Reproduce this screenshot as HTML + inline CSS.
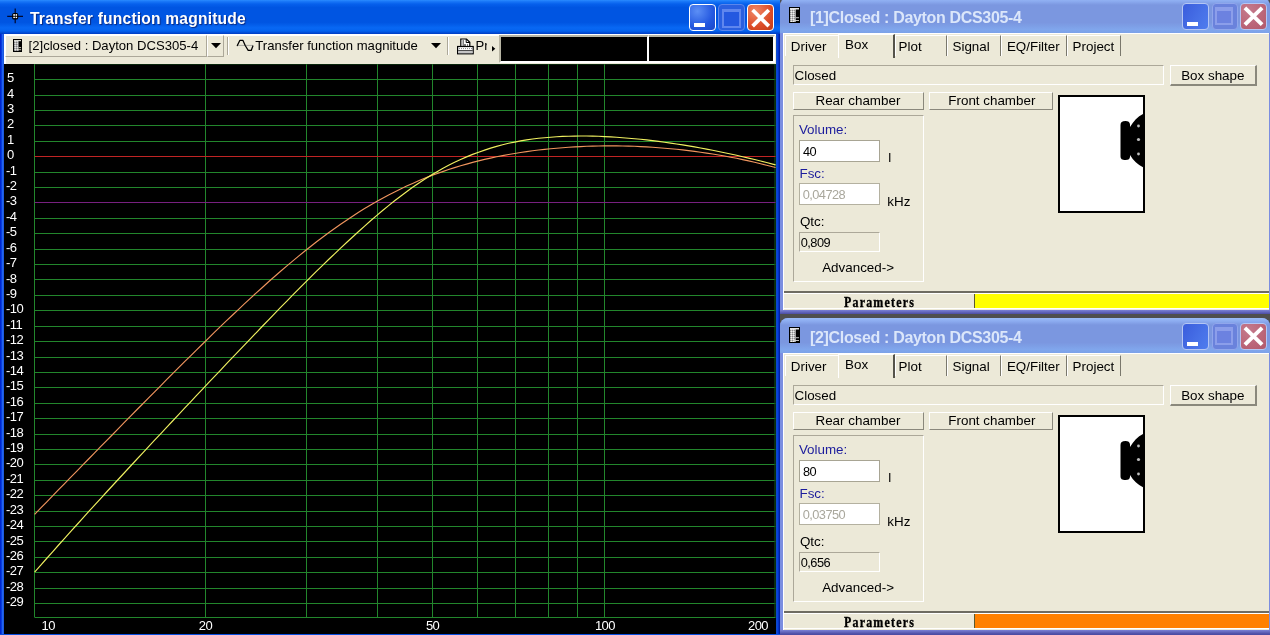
<!DOCTYPE html>
<html><head><meta charset="utf-8"><title>Transfer function magnitude</title>
<style>
html,body{margin:0;padding:0}
#mw,.rwin{will-change:transform}
body{width:1270px;height:635px;overflow:hidden;position:relative;background:#4e4e4e;font-family:"Liberation Sans",sans-serif;font-size:13px;color:#000}
.ax{font-family:"Liberation Sans",sans-serif;font-size:13px;fill:#fff;letter-spacing:-0.55px}
#mw{position:absolute;left:0;top:0;width:780px;height:635px;background:#000;overflow:hidden}
#mw>*{position:absolute}
#mtitle{left:0;top:0;width:780px;height:34px;background:linear-gradient(#2a8cff 0%,#1a78f8 4%,#0660ec 12%,#0055e2 22%,#0055e2 66%,#0868f4 82%,#0462ee 91%,#0040c8 99%)}
#mtitle .tt{position:absolute;left:30px;top:9.4px;line-height:20px;font-weight:bold;font-size:15.6px;letter-spacing:0.2px;color:#fff;text-shadow:1px 1px 1px #0a2a80;white-space:nowrap}
#mbl{left:0;top:34px;width:4px;height:601px;background:linear-gradient(90deg,#0020cc 0,#0030d6 30%,#2264f2 60%,#2060ea 85%,#123c9c 100%)}
#mbr{left:775.6px;top:34px;width:4.4px;height:601px;background:linear-gradient(90deg,#1050c0 0,#0a42dc 35%,#0030c4 65%,#001890 100%)}
#mbb{left:0;top:633.5px;width:780px;height:2px;background:#0a4fe0}
#tool{left:4px;top:34px;width:772px;height:29.5px;background:#ece9d8;border-top:2px solid #fff;border-left:2px solid #fff;box-sizing:border-box}
.tbtn{box-sizing:border-box;border:1px solid #fff;border-right-color:#aca899;border-bottom-color:#aca899}
.tl{white-space:nowrap;line-height:15px;font-size:13.1px}
.tsep{top:37px;width:1px;height:18px;background:#aca899;border-right:1px solid #fff}
.bb{background:#000;border-top:2px solid #b8b5a4;border-bottom:2px solid #fff;border-right:2px solid #fff;box-sizing:border-box;top:35px;height:28.4px}
.tb{position:absolute;top:4px;width:25px;height:25px;border:1px solid #fff;border-radius:4px}
#mmin i{position:absolute;left:4px;top:18px;width:11px;height:4px;background:#fff}
#mmax i{position:absolute;left:3px;top:3.5px;width:15px;height:14.5px;border:2px solid #5f86ee;border-top-width:3.5px;background:#2458e0}
#mcls svg{position:absolute;left:-1px;top:-1.5px}
#mmin{left:689px;background:radial-gradient(circle at 30% 25%,#5c8ff5,#2458e0 60%,#1a47c8)}
#mmax{left:718px;background:#2a5fe0;border-color:#5a86ec}
#mcls{left:747px;background:radial-gradient(circle at 30% 25%,#f08868,#dc4c28 60%,#c03a18)}
.rwin{position:absolute;left:780px;width:490px;height:316px;background:linear-gradient(#7b8ee0 0,#7b8ee0 311px,#8088dc 311.5px,#4c4ca4 316px);border-radius:8px 8px 0 0}
.rtitle{position:absolute;left:0;top:0;width:490px;height:35px;background:linear-gradient(#9abaf8 0%,#8cacf0 9%,#7b97e0 20%,#7b97e0 70%,#80a6ec 90%,#7ca2e8 100%);border-radius:8px 8px 0 0}
.ticon{position:absolute;left:9px;top:9px}
.rtt{position:absolute;left:30px;top:9.7px;font-weight:bold;font-size:16px;line-height:20px;letter-spacing:-0.33px;color:#dbe6fa;white-space:nowrap}
.rtitle .tb{top:5.3px;width:24.6px;height:24.3px;border-color:#b4c6f4}
.rmin{left:402.1px;background:linear-gradient(120deg,#3c60de 10%,#466fe6 55%,#4e7cee 100%)}
.rmin i{position:absolute;left:4px;bottom:2.7px;width:11px;height:3.8px;background:#fff}
.rmax{left:431.6px;background:#6a82dc;border-color:#90a6ec !important}
.rmax i{position:absolute;left:2.5px;top:2.8px;width:14px;height:12.2px;border:2.5px solid #8c9eea;border-top-width:4px;background:#6c82e0}
.rcls{left:460px;background:radial-gradient(circle at 30% 25%,#c47a8c,#bb6578 60%,#b05a6c)}
.rcls svg{position:absolute;left:-1px;top:-1px}
.rbody{position:absolute;left:3px;top:35px;width:485.5px;height:276.6px;background:#ece9d8;border-top:1px solid #fff;border-left:1px solid #fff;box-sizing:border-box;font-size:13.4px}
.rbody>*{margin-top:-1px}
.tab{position:absolute;border:1px solid #fff;border-right:1.5px solid #7a786c;border-bottom:none;box-sizing:border-box;white-space:nowrap;background:#ece9d8}
.tab span{position:absolute;line-height:15px}
.tab.sel{border-right:2px solid #55534a}
.field{position:absolute;border:1px solid #aca899;border-right-color:#fff;border-bottom-color:#fff;box-sizing:border-box}
.btn{position:absolute;border:1px solid #fff;border-right:1.5px solid #8a887c;border-bottom:1.5px solid #8a887c;box-sizing:border-box}
.group{position:absolute;border:1px solid #aca899;border-right-color:#fff;border-bottom-color:#fff;box-sizing:border-box}
.lbl{position:absolute;white-space:nowrap;line-height:15px}
.blue{color:#1c1c9c}
.gray{color:#a9a79c}
.inp{position:absolute;background:#fff;border:1.3px solid #a8a594;box-sizing:border-box}
.inp.dis{border-color:#b4b1a0}
.boxpic{position:absolute;width:83.5px;height:114px;border:2px solid #000;background:#fff}
.psep{position:absolute;left:0;width:484.5px;height:2px;background:#6e6c62}
.pbar{position:absolute;left:0;width:484.5px;height:16.3px;background:#ece9d8;border-top:1px solid #fff;border-bottom:1px solid #fff;box-sizing:border-box}
.ptxt{position:absolute;top:0.2px;font-family:"Liberation Serif",serif;font-weight:bold;font-size:14.6px;line-height:16px;letter-spacing:1.45px;transform:scaleX(.82);transform-origin:0 50%;-webkit-text-stroke:0.35px #000;white-space:nowrap}
.pcol{position:absolute;top:0px;right:0;height:14.3px;border-left:1px solid #5a5a30}
.btn.b2{border-right-width:2px;border-bottom-width:2px}
.tab.nor{border-right:none}
.num{letter-spacing:-0.55px}
</style></head><body>
<div id="mw">
<svg id="chart" width="780" height="635" viewBox="0 0 780 635" style="position:absolute;left:0;top:0">
<line x1="34.6" y1="79.50" x2="775.5" y2="79.50" stroke="#22862c" stroke-width="1"/>
<line x1="34.6" y1="95.50" x2="775.5" y2="95.50" stroke="#22862c" stroke-width="1"/>
<line x1="34.6" y1="110.50" x2="775.5" y2="110.50" stroke="#22862c" stroke-width="1"/>
<line x1="34.6" y1="125.50" x2="775.5" y2="125.50" stroke="#22862c" stroke-width="1"/>
<line x1="34.6" y1="141.50" x2="775.5" y2="141.50" stroke="#22862c" stroke-width="1"/>
<line x1="34.6" y1="172.50" x2="775.5" y2="172.50" stroke="#22862c" stroke-width="1"/>
<line x1="34.6" y1="187.50" x2="775.5" y2="187.50" stroke="#22862c" stroke-width="1"/>
<line x1="34.6" y1="218.50" x2="775.5" y2="218.50" stroke="#22862c" stroke-width="1"/>
<line x1="34.6" y1="233.50" x2="775.5" y2="233.50" stroke="#22862c" stroke-width="1"/>
<line x1="34.6" y1="249.50" x2="775.5" y2="249.50" stroke="#22862c" stroke-width="1"/>
<line x1="34.6" y1="264.50" x2="775.5" y2="264.50" stroke="#22862c" stroke-width="1"/>
<line x1="34.6" y1="279.50" x2="775.5" y2="279.50" stroke="#22862c" stroke-width="1"/>
<line x1="34.6" y1="295.50" x2="775.5" y2="295.50" stroke="#22862c" stroke-width="1"/>
<line x1="34.6" y1="310.50" x2="775.5" y2="310.50" stroke="#22862c" stroke-width="1"/>
<line x1="34.6" y1="326.50" x2="775.5" y2="326.50" stroke="#22862c" stroke-width="1"/>
<line x1="34.6" y1="341.50" x2="775.5" y2="341.50" stroke="#22862c" stroke-width="1"/>
<line x1="34.6" y1="357.50" x2="775.5" y2="357.50" stroke="#22862c" stroke-width="1"/>
<line x1="34.6" y1="372.50" x2="775.5" y2="372.50" stroke="#22862c" stroke-width="1"/>
<line x1="34.6" y1="387.50" x2="775.5" y2="387.50" stroke="#22862c" stroke-width="1"/>
<line x1="34.6" y1="403.50" x2="775.5" y2="403.50" stroke="#22862c" stroke-width="1"/>
<line x1="34.6" y1="418.50" x2="775.5" y2="418.50" stroke="#22862c" stroke-width="1"/>
<line x1="34.6" y1="434.50" x2="775.5" y2="434.50" stroke="#22862c" stroke-width="1"/>
<line x1="34.6" y1="449.50" x2="775.5" y2="449.50" stroke="#22862c" stroke-width="1"/>
<line x1="34.6" y1="464.50" x2="775.5" y2="464.50" stroke="#22862c" stroke-width="1"/>
<line x1="34.6" y1="480.50" x2="775.5" y2="480.50" stroke="#22862c" stroke-width="1"/>
<line x1="34.6" y1="495.50" x2="775.5" y2="495.50" stroke="#22862c" stroke-width="1"/>
<line x1="34.6" y1="511.50" x2="775.5" y2="511.50" stroke="#22862c" stroke-width="1"/>
<line x1="34.6" y1="526.50" x2="775.5" y2="526.50" stroke="#22862c" stroke-width="1"/>
<line x1="34.6" y1="541.50" x2="775.5" y2="541.50" stroke="#22862c" stroke-width="1"/>
<line x1="34.6" y1="557.50" x2="775.5" y2="557.50" stroke="#22862c" stroke-width="1"/>
<line x1="34.6" y1="572.50" x2="775.5" y2="572.50" stroke="#22862c" stroke-width="1"/>
<line x1="34.6" y1="588.50" x2="775.5" y2="588.50" stroke="#22862c" stroke-width="1"/>
<line x1="34.6" y1="603.50" x2="775.5" y2="603.50" stroke="#22862c" stroke-width="1"/>
<line x1="34.50" y1="64" x2="34.50" y2="617.3" stroke="#22862c" stroke-width="1"/>
<line x1="205.50" y1="64" x2="205.50" y2="617.3" stroke="#22862c" stroke-width="1"/>
<line x1="306.50" y1="64" x2="306.50" y2="617.3" stroke="#22862c" stroke-width="1"/>
<line x1="377.50" y1="64" x2="377.50" y2="617.3" stroke="#22862c" stroke-width="1"/>
<line x1="432.50" y1="64" x2="432.50" y2="617.3" stroke="#22862c" stroke-width="1"/>
<line x1="477.50" y1="64" x2="477.50" y2="617.3" stroke="#22862c" stroke-width="1"/>
<line x1="515.50" y1="64" x2="515.50" y2="617.3" stroke="#22862c" stroke-width="1"/>
<line x1="548.50" y1="64" x2="548.50" y2="617.3" stroke="#22862c" stroke-width="1"/>
<line x1="577.50" y1="64" x2="577.50" y2="617.3" stroke="#22862c" stroke-width="1"/>
<line x1="604.50" y1="64" x2="604.50" y2="617.3" stroke="#22862c" stroke-width="1"/>
<line x1="34.6" y1="64" x2="775.5" y2="64" stroke="#104a16" stroke-width="1.2"/>
<line x1="775" y1="64" x2="775" y2="617.3" stroke="#104a16" stroke-width="1.2"/>
<line x1="34.6" y1="617.5" x2="775.5" y2="617.5" stroke="#22862c" stroke-width="1"/>
<line x1="34.6" y1="156.50" x2="775.5" y2="156.50" stroke="#c02424" stroke-width="1"/>
<line x1="34.6" y1="202.50" x2="775.5" y2="202.50" stroke="#782080" stroke-width="1"/>
<path d="M34.6,514.4 L40.6,508.2 L46.6,502.1 L52.6,495.9 L58.6,489.7 L64.6,483.6 L70.6,477.4 L76.6,471.3 L82.6,465.1 L88.6,459.0 L94.6,452.9 L100.6,446.7 L106.6,440.6 L112.6,434.5 L118.6,428.4 L124.6,422.2 L130.6,416.1 L136.6,410.0 L142.6,404.0 L148.6,397.9 L154.6,391.8 L160.6,385.8 L166.6,379.7 L172.6,373.7 L178.6,367.7 L184.6,361.7 L190.6,355.8 L196.6,349.9 L202.6,344.0 L208.6,338.1 L214.6,332.2 L220.6,326.4 L226.6,320.7 L232.6,315.0 L238.6,309.3 L244.6,303.7 L250.6,298.1 L256.6,292.6 L262.6,287.2 L268.6,281.8 L274.6,276.5 L280.6,271.3 L286.6,266.1 L292.6,261.1 L298.6,256.1 L304.6,251.3 L310.6,246.5 L316.6,241.8 L322.6,237.3 L328.6,232.8 L334.6,228.5 L340.6,224.3 L346.6,220.2 L352.6,216.2 L358.6,212.3 L364.6,208.6 L370.6,205.0 L376.6,201.5 L382.6,198.2 L388.6,195.0 L394.6,191.9 L400.6,188.9 L406.6,186.1 L412.6,183.4 L418.6,180.8 L424.6,178.3 L430.6,175.9 L436.6,173.7 L442.6,171.6 L448.6,169.5 L454.6,167.6 L460.6,165.8 L466.6,164.1 L472.6,162.4 L478.6,160.9 L484.6,159.4 L490.6,158.1 L496.6,156.8 L502.6,155.6 L508.6,154.5 L514.6,153.5 L520.6,152.5 L526.6,151.6 L532.6,150.8 L538.6,150.0 L544.6,149.4 L550.6,148.7 L556.6,148.2 L562.6,147.7 L568.6,147.3 L574.6,146.9 L580.6,146.6 L586.6,146.3 L592.6,146.1 L598.6,146.0 L604.6,145.9 L610.6,145.9 L616.6,145.9 L622.6,146.0 L628.6,146.1 L634.6,146.3 L640.6,146.6 L646.6,146.9 L652.6,147.3 L658.6,147.7 L664.6,148.2 L670.6,148.7 L676.6,149.3 L682.6,149.9 L688.6,150.6 L694.6,151.4 L700.6,152.2 L706.6,153.1 L712.6,154.0 L718.6,155.0 L724.6,156.0 L730.6,157.2 L736.6,158.3 L742.6,159.6 L748.6,160.9 L754.6,162.2 L760.6,163.7 L766.6,165.2 L772.6,166.7 L775.6,167.5" fill="none" stroke="#f0955e" stroke-width="1.15"/>
<path d="M34.6,572.1 L40.6,565.3 L46.6,558.5 L52.6,551.8 L58.6,545.0 L64.6,538.3 L70.6,531.6 L76.6,525.0 L82.6,518.3 L88.6,511.7 L94.6,505.1 L100.6,498.6 L106.6,492.0 L112.6,485.5 L118.6,479.0 L124.6,472.5 L130.6,466.0 L136.6,459.5 L142.6,453.1 L148.6,446.6 L154.6,440.2 L160.6,433.8 L166.6,427.4 L172.6,421.0 L178.6,414.6 L184.6,408.2 L190.6,401.8 L196.6,395.4 L202.6,389.1 L208.6,382.7 L214.6,376.4 L220.6,370.1 L226.6,363.7 L232.6,357.4 L238.6,351.1 L244.6,344.8 L250.6,338.6 L256.6,332.3 L262.6,326.0 L268.6,319.8 L274.6,313.6 L280.6,307.4 L286.6,301.3 L292.6,295.2 L298.6,289.1 L304.6,283.1 L310.6,277.1 L316.6,271.2 L322.6,265.3 L328.6,259.5 L334.6,253.8 L340.6,248.1 L346.6,242.5 L352.6,237.0 L358.6,231.5 L364.6,226.1 L370.6,220.8 L376.6,215.6 L382.6,210.5 L388.6,205.6 L394.6,200.8 L400.6,196.2 L406.6,191.7 L412.6,187.3 L418.6,183.2 L424.6,179.3 L430.6,175.5 L436.6,171.9 L442.6,168.5 L448.6,165.3 L454.6,162.3 L460.6,159.5 L466.6,156.9 L472.6,154.4 L478.6,152.2 L484.6,150.1 L490.6,148.1 L496.6,146.4 L502.6,144.8 L508.6,143.3 L514.6,142.1 L520.6,140.9 L526.6,139.9 L532.6,139.0 L538.6,138.3 L544.6,137.7 L550.6,137.2 L556.6,136.7 L562.6,136.4 L568.6,136.2 L574.6,136.1 L580.6,136.0 L586.6,136.0 L592.6,136.1 L598.6,136.3 L604.6,136.6 L610.6,136.9 L616.6,137.2 L622.6,137.7 L628.6,138.2 L634.6,138.7 L640.6,139.3 L646.6,139.9 L652.6,140.6 L658.6,141.4 L664.6,142.2 L670.6,143.1 L676.6,144.0 L682.6,144.9 L688.6,145.9 L694.6,146.9 L700.6,148.0 L706.6,149.1 L712.6,150.3 L718.6,151.5 L724.6,152.7 L730.6,154.0 L736.6,155.3 L742.6,156.7 L748.6,158.1 L754.6,159.5 L760.6,161.0 L766.6,162.5 L772.6,164.1 L775.6,164.9" fill="none" stroke="#f0f060" stroke-width="1.15"/>
<text x="7" y="82.1" class="ax">5</text>
<text x="7" y="97.6" class="ax">4</text>
<text x="7" y="113.0" class="ax">3</text>
<text x="7" y="128.4" class="ax">2</text>
<text x="7" y="143.8" class="ax">1</text>
<text x="7" y="159.2" class="ax">0</text>
<text x="6" y="174.6" class="ax">-1</text>
<text x="6" y="190.0" class="ax">-2</text>
<text x="6" y="205.4" class="ax">-3</text>
<text x="6" y="220.8" class="ax">-4</text>
<text x="6" y="236.2" class="ax">-5</text>
<text x="6" y="251.7" class="ax">-6</text>
<text x="6" y="267.1" class="ax">-7</text>
<text x="6" y="282.5" class="ax">-8</text>
<text x="6" y="297.9" class="ax">-9</text>
<text x="6" y="313.3" class="ax">-10</text>
<text x="6" y="328.7" class="ax">-11</text>
<text x="6" y="344.1" class="ax">-12</text>
<text x="6" y="359.5" class="ax">-13</text>
<text x="6" y="374.9" class="ax">-14</text>
<text x="6" y="390.4" class="ax">-15</text>
<text x="6" y="405.8" class="ax">-16</text>
<text x="6" y="421.2" class="ax">-17</text>
<text x="6" y="436.6" class="ax">-18</text>
<text x="6" y="452.0" class="ax">-19</text>
<text x="6" y="467.4" class="ax">-20</text>
<text x="6" y="482.8" class="ax">-21</text>
<text x="6" y="498.2" class="ax">-22</text>
<text x="6" y="513.6" class="ax">-23</text>
<text x="6" y="529.0" class="ax">-24</text>
<text x="6" y="544.5" class="ax">-25</text>
<text x="6" y="559.9" class="ax">-26</text>
<text x="6" y="575.3" class="ax">-27</text>
<text x="6" y="590.7" class="ax">-28</text>
<text x="6" y="606.1" class="ax">-29</text>
<text x="41.6" y="630.4" text-anchor="start" class="ax">10</text>
<text x="205.4" y="630.4" text-anchor="middle" class="ax">20</text>
<text x="432.6" y="630.4" text-anchor="middle" class="ax">50</text>
<text x="604.9" y="630.4" text-anchor="middle" class="ax">100</text>
<text x="768.0" y="630.4" text-anchor="end" class="ax">200</text>
</svg>
<div id="mtitle"><svg style="position:absolute;left:7px;top:8px" width="17" height="16" viewBox="0 0 17 16"><path d="M8.2 0.5V15.3M0.2 8.3H16" stroke="#00082e" stroke-width="1.2"/><rect x="5.2" y="5" width="6" height="6.5" rx="1.6" fill="#000"/><rect x="6.3" y="6.1" width="1.6" height="1.7" fill="#fff"/><rect x="8.6" y="6.1" width="1.5" height="1.7" fill="#fff"/><rect x="6.3" y="8.7" width="1.6" height="1.4" fill="#fff"/><rect x="8.6" y="8.7" width="1.5" height="1.4" fill="#fff"/></svg><span class="tt">Transfer function magnitude</span>
<div class="tb" id="mmin"><i></i></div><div class="tb" id="mmax"><i></i></div><div class="tb" id="mcls"><svg width="27" height="27" viewBox="0 0 27 27"><path d="M5.6 6 L21.8 22.2 M21.8 6 L5.6 22.2" stroke="#fff" stroke-width="3.8" stroke-linecap="butt"/></svg></div></div>
<div id="tool"></div>
<div class="tbtn" style="left:5px;top:35px;width:202px;height:22px"></div>
<div class="tbtn" style="left:207px;top:35px;width:17px;height:22px"></div>
<svg style="left:13px;top:39px" width="9" height="13" viewBox="0 0 9 13"><rect width="9" height="13" fill="#000"/><rect x="1" y="1" width="4.6" height="11" fill="#b4b4b4"/><path d="M1.5 1v11M3.5 1v11" stroke="#808080" stroke-width="1" stroke-dasharray="1 1"/><path d="M2.5 2v10M4.5 2v10" stroke="#e0e0e0" stroke-width="1" stroke-dasharray="1 1"/><rect x="1" y="1" width="7" height="1.2" fill="#d8d8d0"/><rect x="5.6" y="8.2" width="2.5" height="0.9" fill="#e4e1d0"/><rect x="4.6" y="10.3" width="3.5" height="0.9" fill="#e4e1d0"/></svg>
<span class="tl" style="left:28.6px;top:38.4px">[2]closed : Dayton DCS305-4</span>
<svg style="left:210.5px;top:43px" width="10" height="6" viewBox="0 0 10 6"><path d="M0 0H10L5 5.2Z" fill="#000"/></svg>
<div class="tsep" style="left:227px"></div>
<svg style="left:236px;top:38px" width="20" height="15" viewBox="0 0 20 15"><path d="M1.5 7.4H17" stroke="#a8a8a0" stroke-width="1"/><path d="M1.3 7.6 L3.8 2.4 L7 2.4 L9.2 7.5 L12.2 12.4 L15.2 12.4 L16.9 8" fill="none" stroke="#000" stroke-width="1.25" stroke-linejoin="round" stroke-linecap="round"/></svg>
<span class="tl" style="left:255.3px;top:38.4px">Transfer function magnitude</span>
<svg style="left:430.5px;top:43px" width="10" height="6" viewBox="0 0 10 6"><path d="M0 0H10L5 5.2Z" fill="#000"/></svg>
<div class="tsep" style="left:447px"></div>
<svg style="left:456.5px;top:37.5px" width="17" height="17" viewBox="0 0 17 17"><path d="M3.8 8.5V1H9.5L12.8 4.2V8.5" fill="#fff" stroke="#000" stroke-width="1.2"/><path d="M9.2 1V4.5H12.8" fill="none" stroke="#000" stroke-width="1"/><path d="M5.5 3H7M5.5 5H7M5.5 7H9M10 7H11" stroke="#000" stroke-width="1"/><rect x="0.6" y="8.5" width="15.6" height="7.3" fill="#fff" stroke="#000" stroke-width="1.2"/><path d="M2 10.6H15" stroke="#888" stroke-dasharray="1 1"/><rect x="1.2" y="12.3" width="14.4" height="0.9" fill="#000"/><rect x="1.2" y="13.2" width="14.4" height="2" fill="#c4c4c4"/></svg>
<span class="tl" style="left:475.6px;top:38.4px;width:11.6px;overflow:hidden">Pr</span>
<svg style="left:492px;top:45.6px" width="4" height="6" viewBox="0 0 4 6"><path d="M0 0L3.3 2.7L0 5.4Z" fill="#000"/></svg>
<div class="bb" style="left:499px;width:150px;border-left:2px solid #b8b5a4"></div>
<div class="bb" style="left:649px;width:126px"></div>
<div id="mbl"></div><div id="mbr"></div><div id="mbb"></div>
</div>
<div class="rwin" style="top:-2px">
<div class="rtitle"><svg class="ticon" width="11" height="16" viewBox="0 0 11 16"><rect width="11" height="16" fill="#000"/><rect x="1" y="1" width="5.8" height="14" fill="#c4c4c4"/><path d="M1.5 1v14M3.5 1v14M5.5 1v14" stroke="#8c8c8c" stroke-width="1" stroke-dasharray="1 1"/><path d="M2.5 2v13M4.5 2v13" stroke="#f0f0f0" stroke-width="1" stroke-dasharray="1 1"/><rect x="1" y="1" width="9" height="1.5" fill="#e4e4e4"/><rect x="6.8" y="10.3" width="3.2" height="0.9" fill="#d8d8d8"/><rect x="5" y="13.1" width="5" height="0.9" fill="#d8d8d8"/></svg><span class="rtt">[1]Closed : Dayton DCS305-4</span>
<div class="tb rmin"><i></i></div><div class="tb rmax"><i></i></div><div class="tb rcls"><svg width="27" height="27" viewBox="0 0 27 27"><path d="M4.9 4.9 L22.1 21.7 M22.1 4.9 L4.9 21.7" stroke="#fff" stroke-width="3.9" stroke-linecap="butt"/></svg></div>
</div>
<div class="rbody">
<div class="tab nor" style="left:1.2px;top:2.4px;width:52.8px;height:21px"><span style="left:4.6px;top:2.3px">Driver</span></div>
<div class="tab" style="left:111px;top:2.4px;width:52.3px;height:21px"><span style="left:2.6px;top:2.3px">Plot</span></div>
<div class="tab" style="left:163.3px;top:2.4px;width:53.7px;height:21px"><span style="left:4.2px;top:2.3px">Signal</span></div>
<div class="tab" style="left:217px;top:2.4px;width:66.0px;height:21px"><span style="left:4.9px;top:2.3px">EQ/Filter</span></div>
<div class="tab" style="left:283px;top:2.4px;width:54.2px;height:21px"><span style="left:4.6px;top:2.3px">Project</span></div>
<div class="tab sel" style="left:53.5px;top:0.6px;width:57.7px;height:24px"><span style="left:6.5px;top:2.2px">Box</span></div>
<div class="field" style="left:9.2px;top:32.2px;width:371.2px;height:19.8px"></div>
<div class="lbl " style="left:10.5px;top:34.6px;font-size:13.4px">Closed</div>
<div class="btn b2" style="left:385.5px;top:32.2px;width:87.0px;height:21.0px"></div>
<div class="lbl " style="left:397.2px;top:35.4px;font-size:13.4px">Box shape</div>
<div class="btn" style="left:9.2px;top:58.5px;width:130.8px;height:18.3px"></div>
<div class="lbl " style="left:31.5px;top:59.8px;font-size:13.4px">Rear chamber</div>
<div class="btn" style="left:145px;top:58.5px;width:123.5px;height:18.3px"></div>
<div class="lbl " style="left:164.3px;top:59.8px;font-size:13.4px">Front chamber</div>
<div class="group" style="left:9.2px;top:82.2px;width:130.4px;height:167.0px"></div>
<div class="lbl blue" style="left:14.9px;top:88.6px;font-size:13.4px">Volume:</div>
<div class="inp" style="left:15.1px;top:107.2px;width:81.2px;height:21.6px"></div>
<div class="lbl num" style="left:18.9px;top:110.7px;font-size:12.8px">40</div>
<div class="lbl " style="left:104.3px;top:116.5px;font-size:13.4px">l</div>
<div class="lbl blue" style="left:15.5px;top:132.9px;font-size:13.4px">Fsc:</div>
<div class="inp dis" style="left:15.1px;top:150.2px;width:81.2px;height:21.6px"></div>
<div class="lbl gray num" style="left:18.7px;top:153.8px;font-size:12.8px">0,04728</div>
<div class="lbl " style="left:103.3px;top:160.8px;font-size:13.4px">kHz</div>
<div class="lbl " style="left:15.9px;top:180.6px;font-size:13.4px">Qtc:</div>
<div class="field" style="left:15.1px;top:199.2px;width:80.5px;height:19.4px"></div>
<div class="lbl num" style="left:16.8px;top:201.7px;font-size:12.8px">0,809</div>
<div class="lbl " style="left:38.2px;top:226.5px;font-size:13.4px">Advanced-&gt;</div>
<div class="boxpic" style="left:273.6px;top:61.9px"><svg width="83.5" height="114" viewBox="0 0 83.5 114"><path d="M83.5 16.7 C78 19 73.5 24 70 30 L70 27.5 C70 25 68 24 65.5 24 C62 24 60.5 25.5 60.5 28 L60.5 59 C60.5 62 62 63 65.5 63 C68.5 63 70 62 70 59.5 L70 58 C73.5 64 78 68 83.5 70.5 Z" fill="#000"/><circle cx="78.5" cy="29" r="1.4" fill="#bdbdbd"/><circle cx="78.5" cy="42.5" r="1.6" fill="#bdbdbd"/><circle cx="78.5" cy="57" r="1.4" fill="#bdbdbd"/></svg></div>
<div class="psep" style="top:258.2px"></div>
<div class="pbar" style="top:260.2px"><span class="ptxt" style="left:60.2px">Parameters</span><div class="pcol" style="left:190px;background:#ffff00"></div></div>
</div></div>
<div class="rwin" style="top:318px">
<div class="rtitle"><svg class="ticon" width="11" height="16" viewBox="0 0 11 16"><rect width="11" height="16" fill="#000"/><rect x="1" y="1" width="5.8" height="14" fill="#c4c4c4"/><path d="M1.5 1v14M3.5 1v14M5.5 1v14" stroke="#8c8c8c" stroke-width="1" stroke-dasharray="1 1"/><path d="M2.5 2v13M4.5 2v13" stroke="#f0f0f0" stroke-width="1" stroke-dasharray="1 1"/><rect x="1" y="1" width="9" height="1.5" fill="#e4e4e4"/><rect x="6.8" y="10.3" width="3.2" height="0.9" fill="#d8d8d8"/><rect x="5" y="13.1" width="5" height="0.9" fill="#d8d8d8"/></svg><span class="rtt">[2]Closed : Dayton DCS305-4</span>
<div class="tb rmin"><i></i></div><div class="tb rmax"><i></i></div><div class="tb rcls"><svg width="27" height="27" viewBox="0 0 27 27"><path d="M4.9 4.9 L22.1 21.7 M22.1 4.9 L4.9 21.7" stroke="#fff" stroke-width="3.9" stroke-linecap="butt"/></svg></div>
</div>
<div class="rbody">
<div class="tab nor" style="left:1.2px;top:2.4px;width:52.8px;height:21px"><span style="left:4.6px;top:2.3px">Driver</span></div>
<div class="tab" style="left:111px;top:2.4px;width:52.3px;height:21px"><span style="left:2.6px;top:2.3px">Plot</span></div>
<div class="tab" style="left:163.3px;top:2.4px;width:53.7px;height:21px"><span style="left:4.2px;top:2.3px">Signal</span></div>
<div class="tab" style="left:217px;top:2.4px;width:66.0px;height:21px"><span style="left:4.9px;top:2.3px">EQ/Filter</span></div>
<div class="tab" style="left:283px;top:2.4px;width:54.2px;height:21px"><span style="left:4.6px;top:2.3px">Project</span></div>
<div class="tab sel" style="left:53.5px;top:0.6px;width:57.7px;height:24px"><span style="left:6.5px;top:2.2px">Box</span></div>
<div class="field" style="left:9.2px;top:32.2px;width:371.2px;height:19.8px"></div>
<div class="lbl " style="left:10.5px;top:34.6px;font-size:13.4px">Closed</div>
<div class="btn b2" style="left:385.5px;top:32.2px;width:87.0px;height:21.0px"></div>
<div class="lbl " style="left:397.2px;top:35.4px;font-size:13.4px">Box shape</div>
<div class="btn" style="left:9.2px;top:58.5px;width:130.8px;height:18.3px"></div>
<div class="lbl " style="left:31.5px;top:59.8px;font-size:13.4px">Rear chamber</div>
<div class="btn" style="left:145px;top:58.5px;width:123.5px;height:18.3px"></div>
<div class="lbl " style="left:164.3px;top:59.8px;font-size:13.4px">Front chamber</div>
<div class="group" style="left:9.2px;top:82.2px;width:130.4px;height:167.0px"></div>
<div class="lbl blue" style="left:14.9px;top:88.6px;font-size:13.4px">Volume:</div>
<div class="inp" style="left:15.1px;top:107.2px;width:81.2px;height:21.6px"></div>
<div class="lbl num" style="left:18.9px;top:110.7px;font-size:12.8px">80</div>
<div class="lbl " style="left:104.3px;top:116.5px;font-size:13.4px">l</div>
<div class="lbl blue" style="left:15.5px;top:132.9px;font-size:13.4px">Fsc:</div>
<div class="inp dis" style="left:15.1px;top:150.2px;width:81.2px;height:21.6px"></div>
<div class="lbl gray num" style="left:18.7px;top:153.8px;font-size:12.8px">0,03750</div>
<div class="lbl " style="left:103.3px;top:160.8px;font-size:13.4px">kHz</div>
<div class="lbl " style="left:15.9px;top:180.6px;font-size:13.4px">Qtc:</div>
<div class="field" style="left:15.1px;top:199.2px;width:80.5px;height:19.4px"></div>
<div class="lbl num" style="left:16.8px;top:201.7px;font-size:12.8px">0,656</div>
<div class="lbl " style="left:38.2px;top:226.5px;font-size:13.4px">Advanced-&gt;</div>
<div class="boxpic" style="left:273.6px;top:61.9px"><svg width="83.5" height="114" viewBox="0 0 83.5 114"><path d="M83.5 16.7 C78 19 73.5 24 70 30 L70 27.5 C70 25 68 24 65.5 24 C62 24 60.5 25.5 60.5 28 L60.5 59 C60.5 62 62 63 65.5 63 C68.5 63 70 62 70 59.5 L70 58 C73.5 64 78 68 83.5 70.5 Z" fill="#000"/><circle cx="78.5" cy="29" r="1.4" fill="#bdbdbd"/><circle cx="78.5" cy="42.5" r="1.6" fill="#bdbdbd"/><circle cx="78.5" cy="57" r="1.4" fill="#bdbdbd"/></svg></div>
<div class="psep" style="top:258.2px"></div>
<div class="pbar" style="top:260.2px"><span class="ptxt" style="left:60.2px">Parameters</span><div class="pcol" style="left:190px;background:#ff8000"></div></div>
</div></div>
<div style="position:absolute;left:780px;top:634px;width:490px;height:1px;background:#4c4ca4"></div>
</body></html>
